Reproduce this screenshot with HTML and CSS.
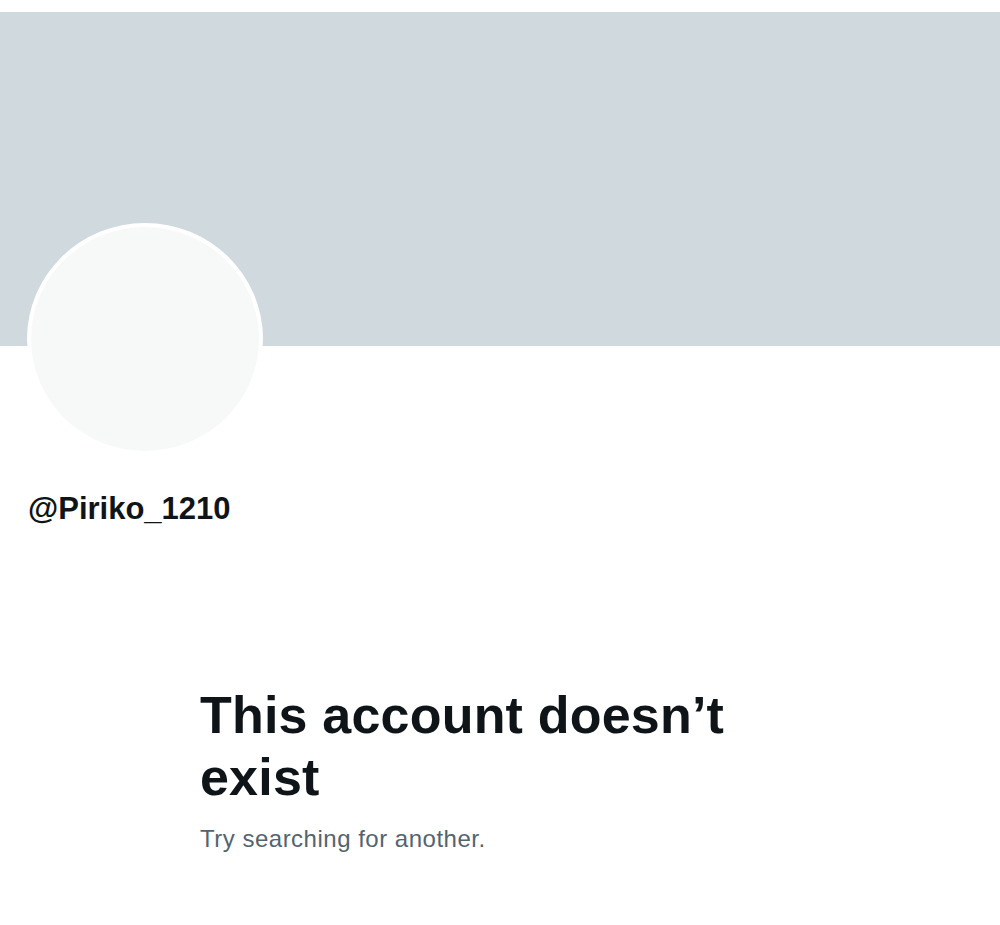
FILE: index.html
```html
<!DOCTYPE html>
<html lang="en">
<head>
<meta charset="utf-8">
<title>Profile</title>
<link rel="stylesheet" href="styles.css">
</head>
<body>
<main class="profile">
  <div class="banner"></div>
  <div class="avatar"></div>
  <div class="handle">@Piriko_1210</div>
  <section class="empty">
    <h1 class="empty-title">This account doesn’t exist</h1>
    <p class="empty-sub">Try searching for another.</p>
  </section>
</main>
</body>
</html>
```

FILE: styles.css
```css
html, body {
  margin: 0;
  padding: 0;
  background: #ffffff;
}
body {
  font-family: "Liberation Sans", Arial, sans-serif;
  color: #0f1419;
}
.profile {
  padding-top: 12px;
  display: flex;
  flex-direction: column;
}
.banner {
  height: 334px;
  background: #cfd9de;
}
.avatar {
  width: 236px;
  height: 232px;
  margin-top: -123px;
  margin-left: 27px;
  box-sizing: border-box;
  border-radius: 50%;
  border: 4px solid #ffffff;
  background: #f7f9f9;
}
.handle {
  margin-top: 37px;
  margin-left: 28px;
  font-size: 31px;
  font-weight: 700;
  line-height: 34px;
  color: #0f1419;
}
.empty {
  margin-top: 158px;
  margin-left: 200px;
  width: 560px;
}
.empty-title {
  margin: 0;
  font-size: 52px;
  line-height: 62px;
  font-weight: 700;
  letter-spacing: 0.2px;
  color: #0f1419;
}
.empty-sub {
  margin: 17px 0 0;
  font-size: 24px;
  line-height: 28px;
  letter-spacing: 0.5px;
  color: #536471;
}
```
